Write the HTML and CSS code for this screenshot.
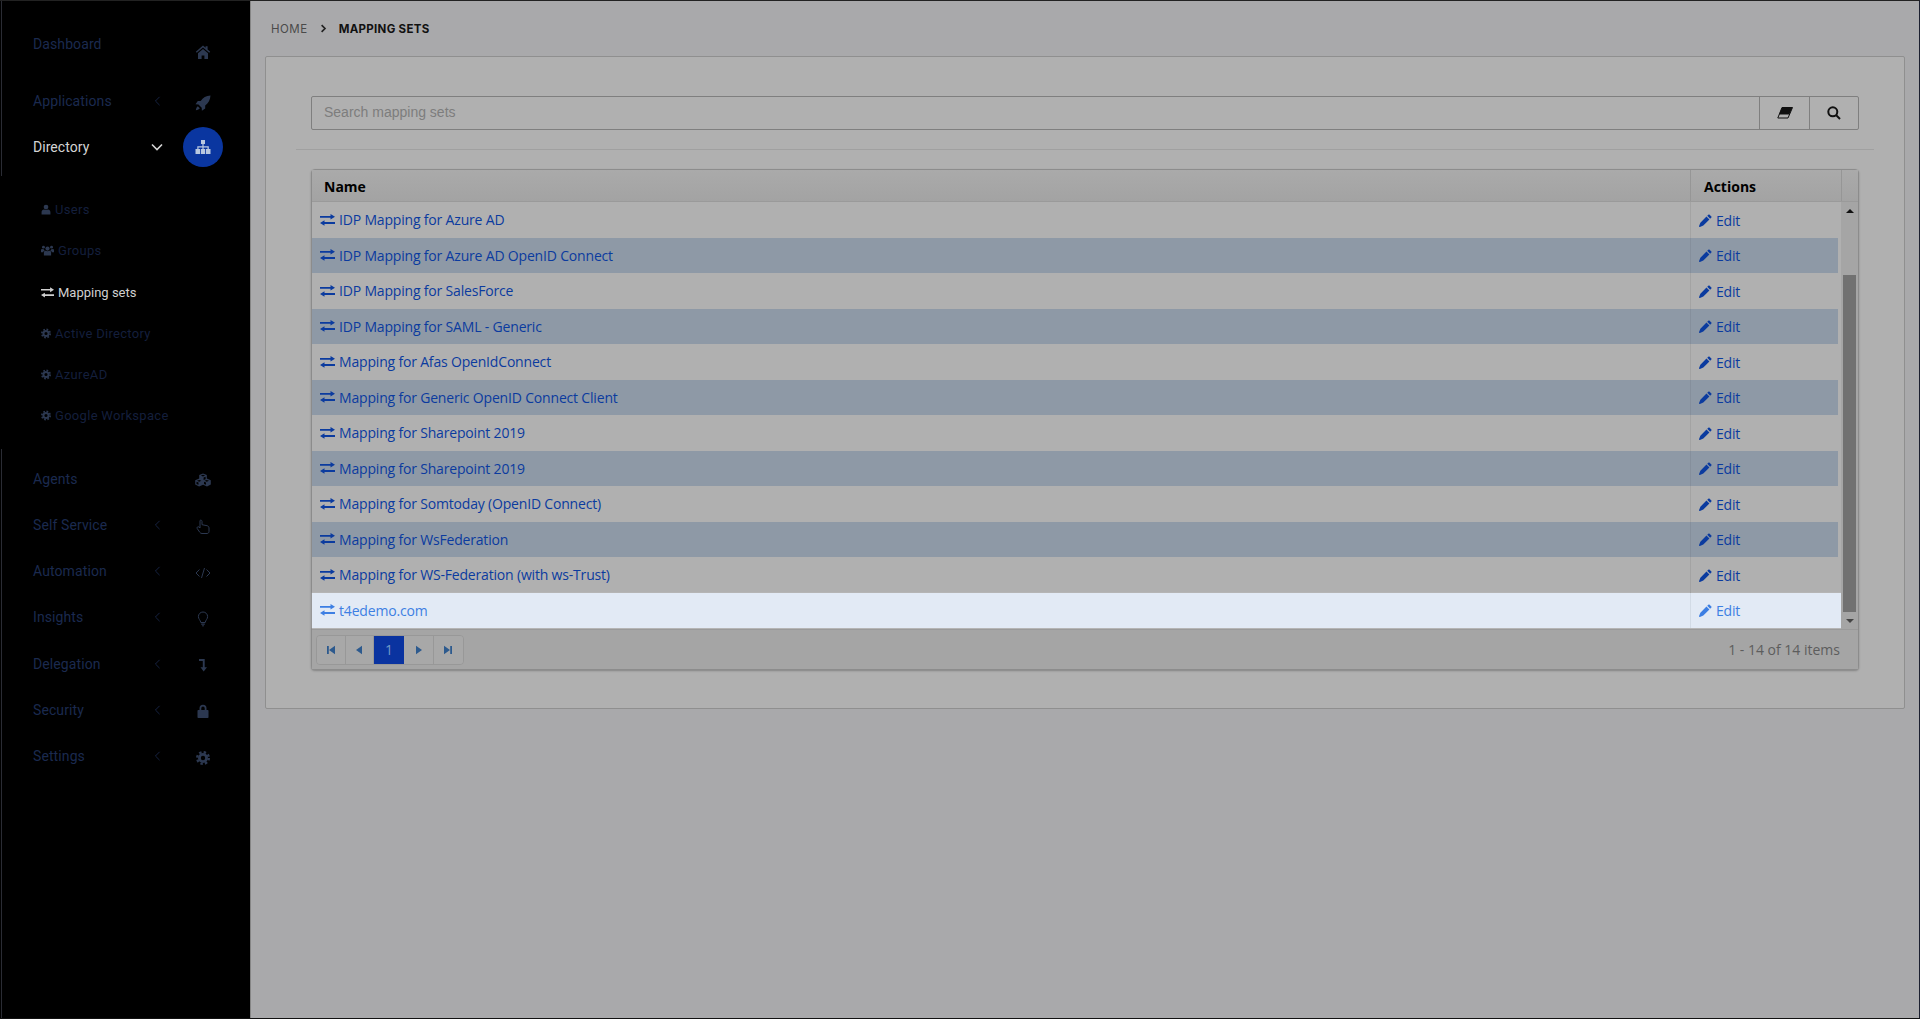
FILE: index.html
```html
<!DOCTYPE html>
<html lang="en">
<head>
<meta charset="utf-8">
<title>Mapping sets</title>
<link rel="stylesheet" href="styles.css">
</head>
<body>
<svg class="defs" width="0" height="0" aria-hidden="true">
  <symbol id="i-ex" viewBox="0 0 15 12"><path d="M0 2h10.500V0L15 2.800 10.500 5.600V3.800H0zM15 8H4.500V6.200L0 9l4.500 2.800V10H15z"/></symbol>
  <symbol id="i-pen" viewBox="0 0 16 16"><path d="M11.600.8a1 1 0 0 1 1.400 0l2.200 2.200a1 1 0 0 1 0 1.400L13.700 5.900 10.100 2.300zM9.200 3.200l3.600 3.600L5.300 14.300 1.100 15.900a.8.800 0 0 1-1-1L1.700 10.700z"/></symbol>
  <symbol id="i-home" viewBox="0 0 16 16"><path d="M8 1.500.8 7.700l1 1.100L8 3.500l6.200 5.300 1-1.100-2.600-2.300V2.200h-2v1.600zM8 5 3 9.200V15h3.600v-3.600h2.800V15H13V9.200z"/></symbol>
  <symbol id="i-rocket" viewBox="0 0 16 16"><path d="M15.500.5C11 .8 8 2.500 5.700 6H2.800L.5 9.300l3 .2 3.200 3.200.2 3 3.300-2.300v-2.900C13.500 8 15.200 5 15.500.5zM2.800 11.200c-1 .7-1.700 2.100-2 4 1.900-.3 3.300-1 4-2z"/></symbol>
  <symbol id="i-site" viewBox="0 0 16 14"><path d="M6 0h4v4H8.600v2.300h5.200V9H15.500v5h-4.500V9h1.500V7.500H8.600V9H10.200v5H5.800V9h1.600V7.500H3.500V9H5v5H.5V9h1.800V6.300h5.100V4H6z"/></symbol>
  <symbol id="i-user" viewBox="0 0 14 14"><circle cx="7" cy="3.600" r="3.300"/><path d="M.8 14v-3.200C.8 8.300 2.500 7 4.200 7c1 .8 4.600.8 5.600 0 1.700 0 3.400 1.300 3.400 3.800V14z"/></symbol>
  <symbol id="i-group" viewBox="0 0 18 14"><circle cx="9" cy="4.300" r="2.900"/><circle cx="3.400" cy="2.400" r="2"/><circle cx="14.600" cy="2.400" r="2"/><path d="M4 14V9.500C4 8 5 7.300 6.300 7.300c1 .8 4.400.8 5.400 0C13 7.300 14 8 14 9.500V14zM0 9.300V6.500C0 5.300 1 4.900 2 4.900c.5.400 1.300.5 2 .4.300 1.100.7 1.500 1.200 2C3.900 7.700 3 8.300 2.900 9.300zM18 9.300V6.500c0-1.200-1-1.600-2-1.600-.5.400-1.300.5-2 .4-.3 1.100-.7 1.500-1.200 2 1.300.4 2.200 1 2.300 2z"/></symbol>
  <symbol id="i-cog" viewBox="0 0 14 14"><circle class="cog-teeth" cx="7" cy="7" r="5.800"/><path fill-rule="evenodd" d="M7 2a5 5 0 1 0 0 10A5 5 0 0 0 7 2zm0 2.800a2.200 2.200 0 1 1 0 4.400 2.200 2.200 0 0 1 0-4.400z"/></symbol>
  <symbol id="i-cubes" viewBox="0 0 18 14"><path d="M9 .5l3.800 1.600v3.500L16.800 7.200v4.400L13 13.500l-3.900-1.800-.1.100-3.900 1.700L1.200 11.600V7.200l4-1.600V2.100zM9 1.800 6.900 2.600 9 3.500l2.100-.9zM5.200 7 3 7.800l2.200.9 2.200-.9zM12.800 7l-2.200.8 2.200.9 2.200-.9zM9.600 4.600v2.500l2-.9V3.700zM2.500 8.800v2.100l2 .9V9.600zM10 8.800v2.100l2 .9V9.600z"/></symbol>
  <symbol id="i-hand" viewBox="0 0 14 16"><path class="ln" d="M4 1.500c1-1 2 0 2 1v3.200l5 1c1 .2 2 1 2 2.300v3.500c0 1.200-.8 2-2 2H6c-1 0-1.700-.4-2.200-1.200L1.200 9.500C.6 8.400 1.800 7.200 3 8l1 1V2z"/></symbol>
  <symbol id="i-code" viewBox="0 0 16 12"><path class="ln" d="M4.500 2.500 1 6l3.500 3.500M11.500 2.500 15 6l-3.500 3.500M9.500 1 6.500 11"/></symbol>
  <symbol id="i-bulb" viewBox="0 0 12 16"><path class="ln" d="M6 1a4.600 4.600 0 0 0-4.600 4.600c0 2.400 2 3.500 2.400 5.900h4.400c.4-2.400 2.400-3.500 2.400-5.900A4.600 4.600 0 0 0 6 1z"/><path d="M4.200 12.400h3.600v1.400H4.200zM5 14.200h2l-.5 1.300h-1z"/></symbol>
  <symbol id="i-level" viewBox="0 0 10 14"><path d="M1 1h5.700v8.200H9L5.700 13.500 2.500 9.200H4.800V3H1z"/></symbol>
  <symbol id="i-lock" viewBox="0 0 12 14"><path fill-rule="evenodd" d="M2.500 6V4.200a3.500 3.500 0 0 1 7 0V6h1.200a.8.800 0 0 1 .8.800v6.400a.8.800 0 0 1-.8.800H1.300a.8.800 0 0 1-.8-.8V6.800a.8.800 0 0 1 .8-.8zm1.800 0h3.400V4.200a1.700 1.700 0 0 0-3.400 0z"/></symbol>
  <symbol id="i-left" viewBox="0 0 8 12"><path class="ln" d="M6.500 1 1.500 6l5 5"/></symbol>
  <symbol id="i-down" viewBox="0 0 12 8"><path class="ln2" d="M1 1.500l5 5 5-5"/></symbol>
  <symbol id="i-right" viewBox="0 0 8 12"><path class="ln3" d="M1.500 1.500 6 6l-4.500 4.500"/></symbol>
  <symbol id="i-eraser" viewBox="0 0 16 12"><path class="ln" d="M5 .5h10.500L11 11H.8z"/><path d="M5 .5h10.500L12.400 7.500H2z"/></symbol>
  <symbol id="i-search" viewBox="0 0 14 14"><circle class="ln4" cx="5.800" cy="5.800" r="4.500"/><path class="ln4" d="M9 9l4 4"/></symbol>
  <symbol id="i-first" viewBox="0 0 10 10"><path d="M1 1h1.800v8H1zM9 .8v8.400L3 5z"/></symbol>
  <symbol id="i-prev" viewBox="0 0 10 10"><path d="M8 .8v8.400L2 5z"/></symbol>
  <symbol id="i-next" viewBox="0 0 10 10"><path d="M2 .8v8.400L8 5z"/></symbol>
  <symbol id="i-last" viewBox="0 0 10 10"><path d="M9 1H7.200v8H9zM1 .8v8.400L7 5z"/></symbol>
</svg>

<div class="app">
  <aside class="sidebar">
    <nav class="nav">
      <a class="item item-first"><span class="label label-raised">Dashboard</span><span class="caret"></span><span class="ico"><svg class="s16"><use href="#i-home"/></svg></span></a>
      <a class="item item-apps"><span class="label">Applications</span><span class="caret"><svg class="c"><use href="#i-left"/></svg></span><span class="ico"><svg class="s16"><use href="#i-rocket"/></svg></span></a>
      <a class="item active"><span class="label">Directory</span><span class="caret"><svg class="cd"><use href="#i-down"/></svg></span><span class="ico circle"><svg class="s16"><use href="#i-site"/></svg></span></a>
      <div class="sub">
        <a class="subitem"><svg class="si"><use href="#i-user"/></svg>Users</a>
        <a class="subitem"><svg class="si wide"><use href="#i-group"/></svg>Groups</a>
        <a class="subitem current"><svg class="si wide"><use href="#i-ex"/></svg>Mapping sets</a>
        <a class="subitem"><svg class="si"><use href="#i-cog"/></svg>Active Directory</a>
        <a class="subitem"><svg class="si"><use href="#i-cog"/></svg>AzureAD</a>
        <a class="subitem"><svg class="si"><use href="#i-cog"/></svg>Google Workspace</a>
      </div>
      <a class="item"><span class="label">Agents</span><span class="caret"></span><span class="ico"><svg class="s18"><use href="#i-cubes"/></svg></span></a>
      <a class="item"><span class="label">Self Service</span><span class="caret"><svg class="c"><use href="#i-left"/></svg></span><span class="ico"><svg class="s16"><use href="#i-hand"/></svg></span></a>
      <a class="item"><span class="label">Automation</span><span class="caret"><svg class="c"><use href="#i-left"/></svg></span><span class="ico"><svg class="s16"><use href="#i-code"/></svg></span></a>
      <a class="item"><span class="label">Insights</span><span class="caret"><svg class="c"><use href="#i-left"/></svg></span><span class="ico"><svg class="s16"><use href="#i-bulb"/></svg></span></a>
      <a class="item"><span class="label">Delegation</span><span class="caret"><svg class="c"><use href="#i-left"/></svg></span><span class="ico"><svg class="s14"><use href="#i-level"/></svg></span></a>
      <a class="item"><span class="label">Security</span><span class="caret"><svg class="c"><use href="#i-left"/></svg></span><span class="ico"><svg class="s14"><use href="#i-lock"/></svg></span></a>
      <a class="item"><span class="label">Settings</span><span class="caret"><svg class="c"><use href="#i-left"/></svg></span><span class="ico"><svg class="s14"><use href="#i-cog"/></svg></span></a>
    </nav>
  </aside>

  <main class="main">
    <div class="crumbs">
      <span class="crumb-home">HOME</span>
      <svg class="crumb-sep"><use href="#i-right"/></svg>
      <span class="crumb-now">MAPPING SETS</span>
    </div>
    <section class="panel">
      <div class="search">
        <div class="search-input">Search mapping sets</div>
        <button class="search-btn b-erase"><svg class="b-eraser"><use href="#i-eraser"/></svg></button>
        <button class="search-btn b-find"><svg class="b-search"><use href="#i-search"/></svg></button>
      </div>
      <hr class="rule">
      <div class="grid">
        <div class="head">
          <div class="h-name">Name</div>
          <div class="h-act">Actions</div>
          <div class="h-sb"></div>
        </div>
        <div class="body">
          <div class="rows">
            <div class="row"><a class="name"><svg class="ex"><use href="#i-ex"/></svg>IDP Mapping for Azure AD</a><a class="edit"><svg class="pen"><use href="#i-pen"/></svg>Edit</a></div>
            <div class="row alt"><a class="name"><svg class="ex"><use href="#i-ex"/></svg>IDP Mapping for Azure AD OpenID Connect</a><a class="edit"><svg class="pen"><use href="#i-pen"/></svg>Edit</a></div>
            <div class="row"><a class="name"><svg class="ex"><use href="#i-ex"/></svg>IDP Mapping for SalesForce</a><a class="edit"><svg class="pen"><use href="#i-pen"/></svg>Edit</a></div>
            <div class="row alt"><a class="name"><svg class="ex"><use href="#i-ex"/></svg>IDP Mapping for SAML - Generic</a><a class="edit"><svg class="pen"><use href="#i-pen"/></svg>Edit</a></div>
            <div class="row"><a class="name"><svg class="ex"><use href="#i-ex"/></svg>Mapping for Afas OpenIdConnect</a><a class="edit"><svg class="pen"><use href="#i-pen"/></svg>Edit</a></div>
            <div class="row alt"><a class="name"><svg class="ex"><use href="#i-ex"/></svg>Mapping for Generic OpenID Connect Client</a><a class="edit"><svg class="pen"><use href="#i-pen"/></svg>Edit</a></div>
            <div class="row"><a class="name"><svg class="ex"><use href="#i-ex"/></svg>Mapping for Sharepoint 2019</a><a class="edit"><svg class="pen"><use href="#i-pen"/></svg>Edit</a></div>
            <div class="row alt"><a class="name"><svg class="ex"><use href="#i-ex"/></svg>Mapping for Sharepoint 2019</a><a class="edit"><svg class="pen"><use href="#i-pen"/></svg>Edit</a></div>
            <div class="row"><a class="name"><svg class="ex"><use href="#i-ex"/></svg>Mapping for Somtoday (OpenID Connect)</a><a class="edit"><svg class="pen"><use href="#i-pen"/></svg>Edit</a></div>
            <div class="row alt"><a class="name"><svg class="ex"><use href="#i-ex"/></svg>Mapping for WsFederation</a><a class="edit"><svg class="pen"><use href="#i-pen"/></svg>Edit</a></div>
            <div class="row"><a class="name"><svg class="ex"><use href="#i-ex"/></svg>Mapping for WS-Federation (with ws-Trust)</a><a class="edit"><svg class="pen"><use href="#i-pen"/></svg>Edit</a></div>
            <div class="row hot"><a class="name"><svg class="ex"><use href="#i-ex"/></svg>t4edemo.com</a><a class="edit"><svg class="pen"><use href="#i-pen"/></svg>Edit</a></div>
          </div>
          <div class="scrollbar">
            <div class="sb-up"></div>
            <div class="sb-track"><div class="sb-thumb"></div></div>
            <div class="sb-down"></div>
          </div>
        </div>
        <div class="pager">
          <div class="pages">
            <a class="pg"><svg class="pi"><use href="#i-first"/></svg></a>
            <a class="pg"><svg class="pi"><use href="#i-prev"/></svg></a>
            <a class="pg cur">1</a>
            <a class="pg pg-w"><svg class="pi"><use href="#i-next"/></svg></a>
            <a class="pg"><svg class="pi"><use href="#i-last"/></svg></a>
          </div>
          <div class="info">1 - 14 of 14 items</div>
        </div>
      </div>
    </section>
  </main>
</div>
</body>
</html>
```

FILE: styles.css
```css
* { box-sizing: border-box; }
html, body { margin: 0; padding: 0; height: 100%; }
body { font-family: "Open Sans", "Noto Sans", sans-serif; background: #a9a9ab; overflow: hidden; }
.defs { display: block; height: 0; }
a { text-decoration: none; color: inherit; }

.app { display: grid; grid-template-columns: 250px 1fr; height: 1019px; border-top: 1px solid #222; border-right: 1px solid #1c2030; border-bottom: 1px solid #111; }

/* sidebar */
.sidebar { background: linear-gradient(to bottom, #2a2c34 0 175px, #000 175px 448px, #2a2c34 448px) 1px 0 / 1px 100% no-repeat, #000; color: #1b2a4f; font-family: Roboto, sans-serif; font-size: 14px; }
.nav { display: flex; flex-direction: column; padding-top: 27px; }
.item { display: grid; grid-template-columns: 33px 115px 34.7px 40px; grid-template-rows: 46.2px; align-items: center; }
.item .label { grid-column: 2; letter-spacing: .1px; }
.item .caret { grid-column: 3; display: flex; justify-content: flex-start; padding-left: 5.500px; color: #1b2a4f; }
.item .ico { grid-column: 4; display: flex; align-items: center; justify-content: center; width: 40px; height: 40px; padding-top: 3px; fill: #2c3850; color: #2c3850; }
.item-first { grid-template-rows: 48px; }
.label-raised { margin-bottom: 16px; }
.item-first .ico { padding-top: 0; }
.item-apps { grid-template-rows: 50px; }
.item.active { grid-template-rows: 42px; color: #d4d4d4; }
.item.active .label { letter-spacing: .05px; }
.item.active .caret { color: #d4d4d4; padding-left: 3px; }
.item .ico.circle { background: #0a36a0; border-radius: 50%; padding-top: 0; fill: #b8c8e0; }
.s16 { width: 16px; height: 16px; }
.s18 { width: 18px; height: 16px; }
.s14 { width: 14px; height: 14px; }
.c { width: 7px; height: 10px; }
.cd { width: 12px; height: 8px; }
.ln, .ln2, .ln3, .ln4 { fill: none; stroke: currentColor; }
.ln { stroke-width: 1; }
.ln2 { stroke-width: 1.6; }
.ln3 { stroke-width: 2.2; }
.ln4 { stroke-width: 2; }
.cog-teeth { fill: none; stroke: currentColor; stroke-width: 2.4; stroke-dasharray: 2.4 2.15; }

.sub { display: flex; flex-direction: column; padding: 21.100px 0 19.600px 41px; font-size: 13px; color: #141f3c; letter-spacing: .3px; }
.subitem { display: flex; align-items: center; height: 41.200px; }
.si { width: 10px; height: 11px; margin-right: 4px; fill: #2c3850; color: #2c3850; }
.si.wide { width: 13px; margin-right: 4px; }
.current { color: #d0d0d0; letter-spacing: 0; }
.current .si { fill: #d0d0d0; }

/* main */
.main { padding: 0 14px 0 14px; min-width: 0; border-left: 1px solid #858585; }
.crumbs { display: flex; align-items: center; height: 55px; padding: 0 0 0 6px; font-family: "Inter", sans-serif; font-size: 11.500px; }
.crumb-home { color: #4a4a4a; letter-spacing: .5px; }
.crumb-sep { width: 7px; height: 9px; margin: 0 12px; color: #222; }
.crumb-now { color: #111; font-weight: 700; letter-spacing: .3px; }

.panel { background: #b0b0b0; border: 1px solid #8f8f8f; border-radius: 2px; padding: 39px 30px; height: 653px; }
.search { display: flex; height: 34px; margin: 0 15px; border: 1px solid #7f7f7f; border-radius: 2px; }
.search-input { flex: 1; display: flex; align-items: center; padding: 0 0 2px 12px; font-family: "Liberation Sans", sans-serif; font-size: 14px; color: #7d7d7d; }
.search-btn { width: 50px; padding: 0; border: 0; border-left: 1px solid #7f7f7f; background: transparent; display: flex; align-items: center; justify-content: center; }
.b-find { width: 49px; }
.b-eraser { width: 16px; height: 12px; color: #111; fill: #111; }
.b-search { width: 14px; height: 14px; color: #111; }
.rule { margin: 19px 0; border: 0; border-top: 1px solid #a0a0a0; }

.grid { margin: 0 15px; border: 1px solid #8c8c8c; border-radius: 4px; box-shadow: 0 1px 2px rgba(0,0,0,.25); background: #a6a6a6; }
.head { display: grid; grid-template-columns: 1fr 151px 17px; height: 32px; background: linear-gradient(#aaa, #a3a3a3); border-bottom: 1px solid #9a9a9a; font-weight: 700; font-size: 14px; color: #000; }
.h-name { padding: 7px 0 0 12px; }
.h-act { padding: 7px 0 0 13px; border-left: 1px solid #969696; }
.h-sb { border-left: 1px solid #969696; }
.body { display: flex; }
.rows { flex: 1; min-width: 0; background: #b0b0b0; }
.row { display: grid; grid-template-columns: 1fr 151px; height: 35.500px; color: #0b3b9f; font-size: 14px; letter-spacing: -.18px; }
.row.alt { background: linear-gradient(#8e99a6, #8e99a6) 0 0 / calc(100% - 3px) 100% no-repeat; }
.row.hot { background: #e2eaf5; color: #3d7fe3; box-shadow: 0 0 1px #ccc; }
.name { display: flex; align-items: center; padding-left: 8px; }
.ex { width: 15px; height: 12px; margin-right: 4px; fill: currentColor; }
.edit { display: flex; align-items: center; padding: 1px 0 0 8px; border-left: 1px solid #a3a3a3; }
.row.alt .edit { border-left-color: #858f9c; }
.row.hot .edit { border-left-color: #d2dbe6; }
.pen { width: 13px; height: 13px; margin-right: 4px; fill: currentColor; }

.scrollbar { width: 17px; display: flex; flex-direction: column; background: #a5a5a5; }
.sb-up { height: 17px; }
.sb-up::after { content: ""; display: block; margin: 7px auto 0; width: 0; border: 4px solid transparent; border-top: 0; border-bottom: 4px solid #111; }
.sb-track { flex: 1; padding: 56px 2px 0; }
.sb-thumb { height: 337px; background: #717171; }
.sb-down { height: 17px; }
.sb-down::after { content: ""; display: block; margin: 7px auto 0; width: 0; border: 4px solid transparent; border-bottom: 0; border-top: 4px solid #444; }

.pager { display: flex; align-items: center; justify-content: space-between; height: 40px; padding: 0 18px 0 4px; border-top: 1px solid #9a9a9a; background: #a5a5a5; }
.pages { display: flex; height: 30px; border: 1px solid #989898; border-radius: 4px; overflow: hidden; }
.pg { width: 28.500px; display: flex; align-items: center; justify-content: center; border-right: 1px solid #989898; background: #a8a8a8; color: #2d5a8e; font-size: 14px; }
.pg:last-child { border-right: 0; }
.pg.cur { width: 30px; background: #0a33a0; color: #6f9bc8; border-right: 0; }
.pg.pg-w { width: 30px; }
.pi { width: 10px; height: 10px; fill: #2d5a8e; }
.info { color: #5d5d5d; font-size: 14px; }
```
